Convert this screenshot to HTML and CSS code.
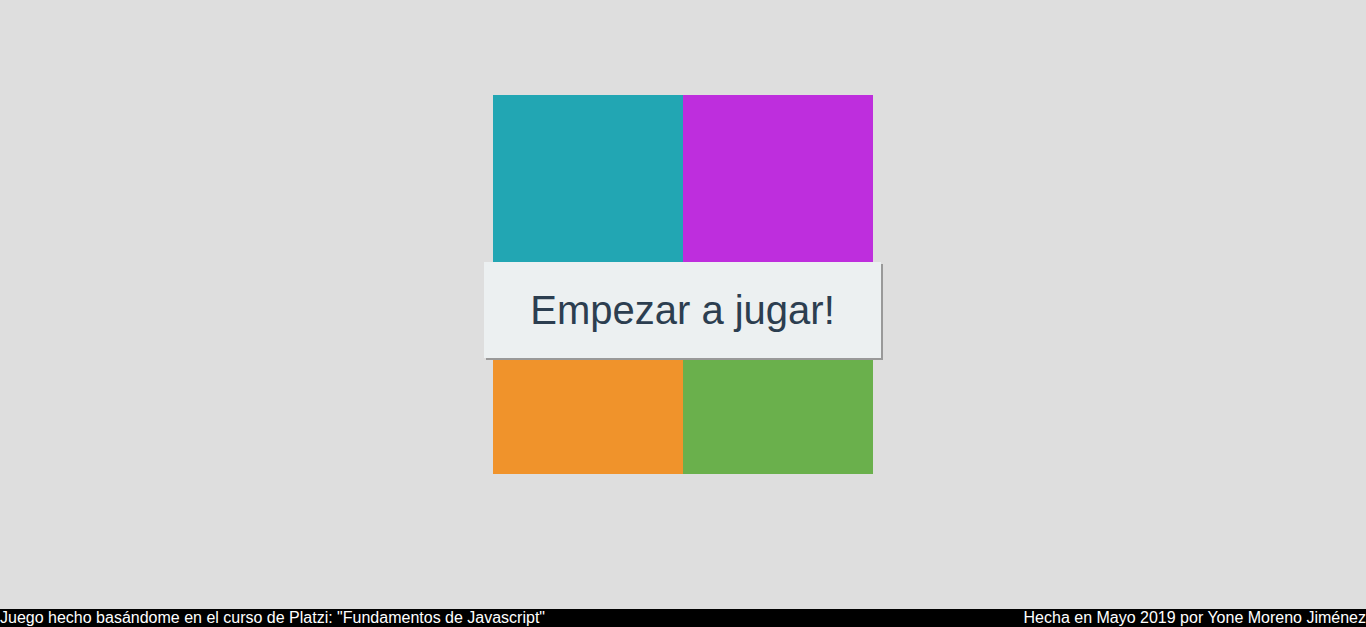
FILE: index.html
```html
<!DOCTYPE html>
<html lang="es">
<head>
<meta charset="utf-8">
<title>Simon dice</title>
<link rel="stylesheet" href="styles.css">
</head>
<body>
<main class="stage">
  <div class="board">
    <div class="color celeste"></div>
    <div class="color violeta"></div>
    <div class="color naranja"></div>
    <div class="color verde"></div>
    <button class="btn-start">Empezar a jugar!</button>
  </div>
</main>
<footer class="footer">
  <span>Juego hecho basándome en el curso de Platzi: "Fundamentos de Javascript"</span>
  <span>Hecha en Mayo 2019 por Yone Moreno Jiménez</span>
</footer>
</body>
</html>
```
FILE: styles.css
```css
html, body {
  margin: 0;
  padding: 0;
  height: 100%;
}
body {
  background: #dedede;
  font-family: "Liberation Sans", Arial, sans-serif;
  display: flex;
  flex-direction: column;
}
.stage {
  flex: 1;
  display: flex;
  justify-content: center;
  align-items: flex-start;
  padding-top: 95px;
}
.board {
  position: relative;
  width: 380px;
  height: 379px;
  display: grid;
  grid-template-columns: 190px 190px;
  grid-template-rows: 190px 189px;
}
.celeste { background: #22a6b3; }
.violeta { background: #be2edd; }
.naranja { background: #f0932b; }
.verde { background: #6ab04c; }
.btn-start {
  position: absolute;
  left: -9px;
  top: 167px;
  width: 397px;
  height: 96px;
  border: none;
  margin: 0;
  padding: 0;
  background: #ecf0f1;
  color: #2c3e50;
  font-family: "Liberation Sans", Arial, sans-serif;
  font-size: 40px;
  box-shadow: 2px 2px 0 #999;
  cursor: pointer;
}
.footer {
  height: 18px;
  background: #000;
  color: #fff;
  font-size: 16px;
  line-height: 18px;
  display: flex;
  justify-content: space-between;
  white-space: nowrap;
}
```
